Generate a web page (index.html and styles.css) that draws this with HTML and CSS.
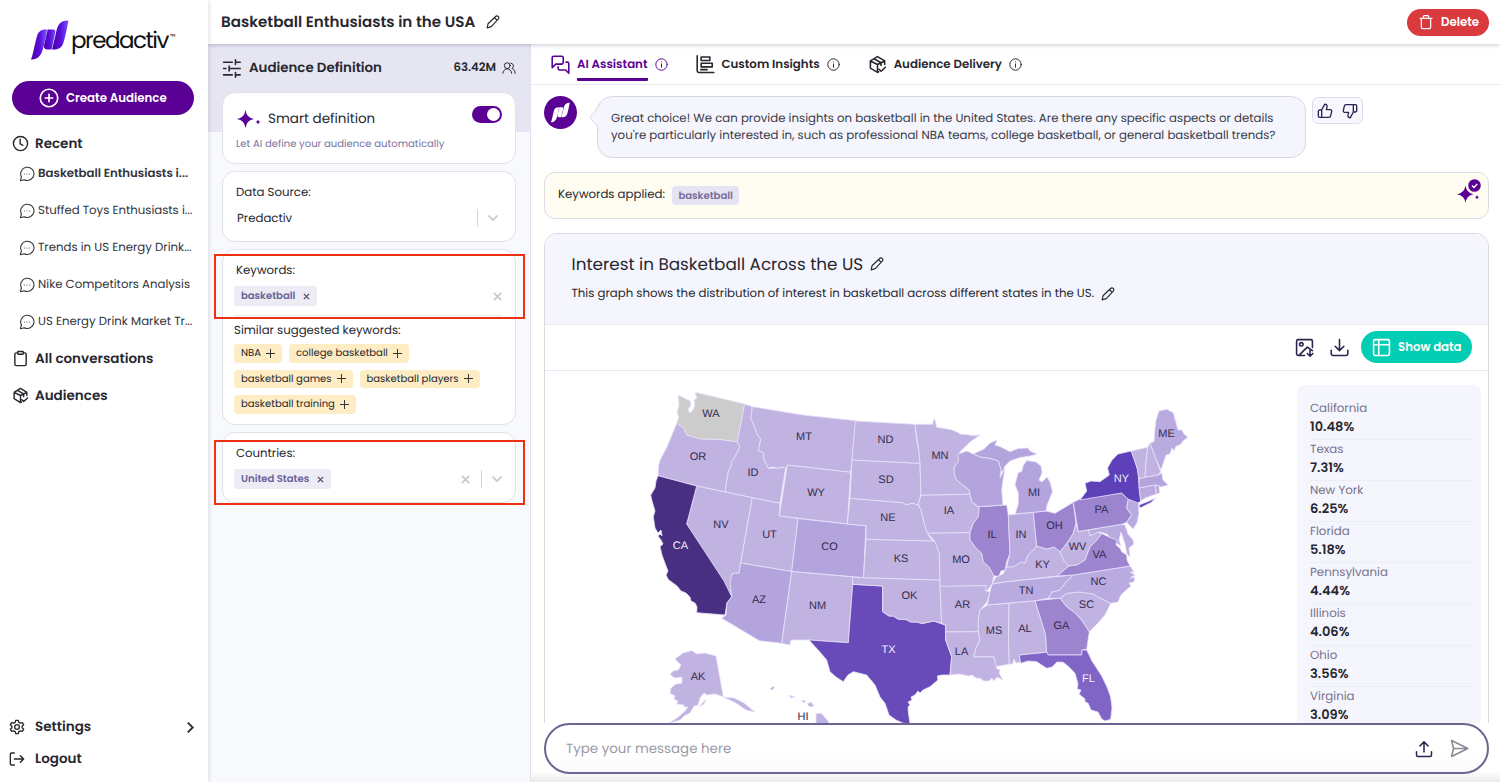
FILE: index.html
```html
<!DOCTYPE html>
<html lang="en">
<head>
<meta charset="utf-8">
<title>Basketball Enthusiasts in the USA</title>
<link rel="stylesheet" href="styles.css">
</head>
<body>
<svg class="defs" width="0" height="0">
  <defs>
    <linearGradient id="brand" x1="0" y1="0" x2="1" y2="0"><stop offset="0" stop-color="#4b00a0"/><stop offset=".55" stop-color="#5a10dc"/><stop offset="1" stop-color="#7a55ff"/></linearGradient>
    <symbol id="mark" viewBox="0 0 38 40"><path d="M0 39.500C2.500 33 4 23 6 16C7.500 11.500 10 9.600 16 9.600C15 16 13.500 23 12 29C10 36 6 40 0 39.500Z"/><path d="M16.600 9.600L22.500 9.600C24.500 9.600 24.600 11 24.300 13L20.500 29.500L16.500 29.500C14 29.500 12.600 28 13 25.500Z"/><path d="M37.500 0.500C36 8 34.500 16 32.500 22.500C31 27.500 28 30 21 29.500L25 13C26.500 5 29 .5 37.500 .5Z"/></symbol>
    <symbol id="chat" viewBox="0 0 24 24"><path d="M2 22l1.700-5.500A10 10 0 1 1 7.800 20.600z"/><path d="M8 12h.01M12 12h.01M16 12h.01"/></symbol>
    <symbol id="pencil" viewBox="0 0 24 24"><path d="M2 22l1.500-7L16.500 2.500a2.800 2.800 0 0 1 4.500 4.500L9 20zM14.500 4.500l4.500 4.500"/></symbol>
    <symbol id="info" viewBox="0 0 24 24"><circle cx="12" cy="12" r="10.500"/><path d="M12 11v6M12 7.200v.1"/></symbol>
    <symbol id="box" viewBox="0 0 24 24"><path d="M21 12V7.500L12 2 3 7.500v9L12 22l1.500-.8M3 7.500l9 4.500 9-4.500M12 12v10M7.500 4.800l9 5v3.500M14 18l2.500 2.500L22 15.500"/></symbol>
    <symbol id="spark" viewBox="0 0 24 18"><path d="M8.500 0Q9.600 7.900 17 9Q9.600 10.100 8.500 18Q7.400 10.100 0 9Q7.400 7.900 8.500 0ZM21 9.500Q21.500 11.600 23.500 12Q21.500 12.400 21 14.500Q20.500 12.400 18.500 12Q20.500 11.600 21 9.500Z"/></symbol>
    <symbol id="thumb" viewBox="0 0 24 24"><path d="M7 10.500v11M15 6l-1 4h6a2 2 0 0 1 2 2.400l-1.500 7a2.600 2.600 0 0 1-2.500 2.100H4a2 2 0 0 1-2-2v-7a2 2 0 0 1 2-2h3L11.500 2A3 3 0 0 1 15 6z"/></symbol>
  </defs>
</svg>
<div class="app">
  <aside class="sidebar">
    <div class="logo"><svg class="logo-mark" fill="url(#brand)"><use href="#mark"/></svg><span class="logo-name">predactiv</span><span class="tm">™</span></div>
    <button class="create"><svg class="ic" viewBox="0 0 24 24"><circle cx="12" cy="12" r="10.500"/><path d="M12 7.500v9M7.500 12h9"/></svg><span>Create Audience</span></button>
    <nav class="nav">
      <div class="nav-head"><svg class="ic" viewBox="0 0 24 24"><circle cx="12" cy="12" r="10"/><path d="M11.500 6v6.500l4 2"/></svg><span>Recent</span></div>
      <div class="nav-item current"><svg class="ic"><use href="#chat"/></svg><span>Basketball Enthusiasts i...</span></div>
      <div class="nav-item"><svg class="ic"><use href="#chat"/></svg><span>Stuffed Toys Enthusiasts i...</span></div>
      <div class="nav-item"><svg class="ic"><use href="#chat"/></svg><span>Trends in US Energy Drink...</span></div>
      <div class="nav-item"><svg class="ic"><use href="#chat"/></svg><span>Nike Competitors Analysis</span></div>
      <div class="nav-item"><svg class="ic"><use href="#chat"/></svg><span>US Energy Drink Market Tr...</span></div>
      <div class="nav-head"><svg class="ic" viewBox="0 0 24 24"><path d="M8 4H6a2 2 0 0 0-2 2v14a2 2 0 0 0 2 2h12a2 2 0 0 0 2-2V6a2 2 0 0 0-2-2h-2"/><rect x="8" y="2" width="8" height="4" rx="1"/></svg><span>All conversations</span></div>
      <div class="nav-head"><svg class="ic"><use href="#box"/></svg><span>Audiences</span></div>
    </nav>
    <div class="nav-foot">
      <div class="foot-item"><svg class="ic" viewBox="0 0 24 24"><circle cx="12" cy="12" r="3.500"/><path d="M10 2h4l.7 3 2.300 1.300 3-.9 2 3.400-2.300 2.200v2l2.300 2.200-2 3.400-3-.9-2.300 1.300-.7 3h-4l-.7-3L7 17.700l-3 .9-2-3.400L4.300 13v-2L2 8.800l2-3.400 3 .9L9.300 5z"/></svg><span>Settings</span><svg class="chev" viewBox="0 0 10 14"><path d="M2 1.500l5.500 5.500L2 12.500"/></svg></div>
      <div class="foot-item"><svg class="ic" viewBox="0 0 24 24"><path d="M8 3H4a2 2 0 0 0-2 2v14a2 2 0 0 0 2 2h4M8 12h14M17 7l5 5-5 5"/></svg><span>Logout</span></div>
    </div>
  </aside>

  <div class="main">
    <header class="topbar"><h1>Basketball Enthusiasts in the USA</h1><svg class="ic pen"><use href="#pencil"/></svg>
      <button class="delete"><svg class="ic" viewBox="0 0 24 24"><path d="M3 6.500h18M8 6.500V4a1.500 1.500 0 0 1 1.500-1.500h5A1.500 1.500 0 0 1 16 4v2.500M5 6.500V20a2 2 0 0 0 2 2h10a2 2 0 0 0 2-2V6.500"/></svg><span>Delete</span></button>
    </header>
    <div class="body">
      <section class="panel">
        <div class="panel-head"><svg class="ic" viewBox="0 0 24 24"><path d="M2 4h11M17 4h6M17 1v6M2 12h3M9 12h14M9 9v6M2 20h11M17 20h6M17 17v6"/></svg><h2>Audience Definition</h2><span class="count">63.42M</span><svg class="ic users" viewBox="0 0 24 24"><circle cx="9" cy="8" r="5"/><path d="M1.500 21a7.500 7.500 0 0 1 15 0M15 3.500a5 5 0 0 1 2 9.300c3 .8 5.500 3.500 5.500 8.200"/></svg></div>
        <div class="card smart">
          <div class="smart-row"><svg class="sparkle"><use href="#spark"/></svg><span class="smart-title">Smart definition</span><span class="toggle"></span></div>
          <p class="hint">Let AI define your audience automatically</p>
        </div>
        <div class="card source"><div class="label">Data Source:</div>
          <div class="select"><span class="value">Predactiv</span><i class="sep"></i><svg class="down" viewBox="0 0 12 8"><path d="M1.500 1.500L6 6l4.500-4.500"/></svg></div>
        </div>
        <div class="card keywords"><div class="label">Keywords:</div>
          <div class="select tags"><span class="tag">basketball <svg class="x" viewBox="0 0 8 8"><path d="M1 1l6 6M7 1L1 7"/></svg></span><svg class="clear" viewBox="0 0 10 10"><path d="M1 1l8 8M9 1L1 9"/></svg></div>
          <div class="similar">Similar suggested keywords:</div>
          <div class="chips"><span class="chip">NBA <b></b></span><span class="chip">college basketball <b></b></span><span class="chip">basketball games <b></b></span><span class="chip">basketball players <b></b></span><span class="chip">basketball training <b></b></span></div>
        </div>
        <div class="card countries"><div class="label">Countries:</div>
          <div class="select tags"><span class="tag">United States <svg class="x" viewBox="0 0 8 8"><path d="M1 1l6 6M7 1L1 7"/></svg></span><svg class="clear" viewBox="0 0 10 10"><path d="M1 1l8 8M9 1L1 9"/></svg><i class="sep"></i><svg class="down" viewBox="0 0 12 8"><path d="M1.500 1.500L6 6l4.500-4.500"/></svg></div>
        </div>
        <div class="callout callout-keywords"></div>
        <div class="callout callout-countries"></div>
      </section>

      <section class="content">
        <div class="tabs">
          <div class="tab active"><svg class="ic" viewBox="0 0 24 24"><path d="M1.500 16V3.500a2 2 0 0 1 2-2h10a2 2 0 0 1 2 2v6a2 2 0 0 1-2 2H6zM19 9h1.500a2 2 0 0 1 2 2v12l-4-4H11a2 2 0 0 1-2-2v-2"/></svg><span class="tab-name">AI Assistant</span><svg class="info"><use href="#info"/></svg></div>
          <div class="tab second"><svg class="ic" viewBox="0 0 24 24"><path d="M1.500 1v19a2 2 0 0 0 2 2h19M6.500 2.500h11v4.500h-11zM6.500 10.500h14v4.500h-14zM6 18.500h8"/></svg><span class="tab-name">Custom Insights</span><svg class="info"><use href="#info"/></svg></div>
          <div class="tab"><svg class="ic"><use href="#box"/></svg><span class="tab-name">Audience Delivery</span><svg class="info"><use href="#info"/></svg></div>
        </div>
        <div class="feed">
          <div class="message">
            <div class="avatar"><svg fill="#fff"><use href="#mark"/></svg></div>
            <div class="bubble"><svg class="tip" viewBox="0 0 12 30"><path d="M11.500 1Q8 9 1.500 15Q1 16 1.500 17L10 26V30H12V0Z" fill="#f5f5fe"/><path d="M11 1Q8 8 1.500 14.500Q.8 15.500 1.500 16.500L8 23Q9 25 9 29" fill="none" stroke="#d8d7e6"/></svg><p>Great choice! We can provide insights on basketball in the United States. Are there any specific aspects or details</p><p>you're particularly interested in, such as professional NBA teams, college basketball, or general basketball trends?</p></div>
            <div class="votes"><svg class="ic"><use href="#thumb"/></svg><svg class="ic flip"><use href="#thumb"/></svg></div>
          </div>
          <div class="applied"><span class="applied-text">Keywords applied:</span><span class="applied-tag">basketball</span>
            <svg class="applied-icon" viewBox="0 0 24 24"><path d="M8.500 6.500Q9.500 14 16.500 15.200Q9.500 16.400 8.500 24Q7.500 16.400 0 15.200Q7.500 14 8.500 6.500Z"/><path d="M20 16q.4 1.800 2 2.200q-1.600.4-2 2.200q-.4-1.800-2-2.200q1.600-.4 2-2.200z"/><circle cx="17.500" cy="6.500" r="7.500" fill="#fffdf2"/><circle cx="17.500" cy="6.500" r="6.300"/><path d="M15 6.500l2 2 3.200-3.500" fill="none" stroke="#fff" stroke-width="1.300"/></svg></div>
          <article class="chart">
            <div class="chart-head"><div class="chart-title"><h3>Interest in Basketball Across the US</h3><svg class="ic pen"><use href="#pencil"/></svg></div>
              <div class="chart-sub"><span>This graph shows the distribution of interest in basketball across different states in the US.</span><svg class="ic pen"><use href="#pencil"/></svg></div></div>
            <div class="chart-tools">
              <svg class="ic" viewBox="0 0 24 24"><path d="M12 22H4a2 2 0 0 1-2-2V4a2 2 0 0 1 2-2h16a2 2 0 0 1 2 2v8M5 22L15.500 11.500 22 16M19 14v9M15.500 19.500L19 23l3.500-3.500"/><circle cx="8" cy="8" r="2.200"/></svg>
              <svg class="ic" viewBox="0 0 24 24"><path d="M1.500 15.500V20a2 2 0 0 0 2 2h17a2 2 0 0 0 2-2v-4.500M12 2v14M6.500 10.500L12 16l5.500-5.500"/></svg>
              <button class="show"><svg class="ic" viewBox="0 0 24 24"><rect x="2" y="2" width="20" height="20" rx="2"/><path d="M2 8.500h20M8.500 2v20"/></svg><span>Show data</span></button>
            </div>
            <div class="chart-body">
              <svg class="map" viewBox="558 371 739 353">
                <g class="states">
                  <path class="none" d="M678.300 395L684 398 690 400.700 691 405 688 410 690 413 693 410 695 405 694 400 697 398 695 393.300 697.300 392.700 744.700 404 737.300 442 720 439.500 700 439 686.700 435 684 428.300 676.700 423.300 679 417 677 413 679 406Z"/>
                  <path d="M676.700 423.300L684 428.300 686.700 435 700 439 720 439.500 737.300 442 740 446.700 735 457 731.700 461.700 731 466 728.300 471.700 725 492 696.700 486 658 475.700 658.500 466 660 460 667 447Z"/>
                  <path d="M744.700 404L752.300 406.700 751 418.300 755 428 757 434 760.700 439.300 758.300 450.700 763.300 452.700 764 459 768.300 468.300 778 468 785.700 467.300 780 503.300 752.300 497.700 725 492 728.300 471.700 731 466 731.700 461.700 735 457 740 446.700 737.300 442Z"/>
                  <path d="M752.300 406.700L803 415 856 420.700 850.700 472.300 787.300 465 785.700 469 784 467 778 468 772 467 768.300 468.300 764 459 763.300 452.700 758.300 450.700 760.700 439.300 757 434 755 428 751 418.300Z"/>
                  <path d="M787.300 465L850.700 472.300 847.300 524 779.300 516Z"/>
                  <path d="M696.700 486L752.300 497.700 740.700 563 739 573.300 735 573 731.700 574 731 583 731.700 596.700 724 585 686.700 524Z"/>
                  <path d="M752.300 497.700L780 503.300 779.300 516 798 518.500 791.700 571.500 740.700 563Z"/>
                  <path class="b" d="M798 518.500L847.300 524 866 525.700 863.500 577.700 791.700 571.500Z"/>
                  <path class="ca" d="M658 475.700L696.700 486 686.700 524 724 581 731.700 596.700 727 603 725 615 696.700 612.700 697 607 695 603 691 601 690 597 686 593 681 591 677 586 668.300 579.500 666 575 668 571 666 566 662 555 660 546.700 663 544 661 540 658 536 660 534 662 536 661 530 658 533 655 528 653.300 516.700 655 511 652.700 503.300 651.500 499 650.700 495 655 488 656 481Z"/>
                  <path class="b" d="M740.700 563L791.700 571.500 781.700 643.300 759.300 640.700 721.700 618.300 726 615 727 603 731.700 596.700 730 583 731.700 574 735 573 739 573.300Z"/>
                  <path d="M791.700 571.500L852.700 577 852.700 584.300 848.300 642.700 809 640 791 640 790 645 781.700 643.300Z"/>
                  <path class="tx" d="M852.700 584.300L882.700 586 882.700 611.700 889 616 893.300 616 898 619 906 619.500 911 622 916.700 622 922 623.500 929 622 934 621 945.700 625.300 945.700 640 951.700 656.700 950 675 942 675 937.300 676 938 680 930 686.700 923 690 920 693 918 691 915 695 911 697 912 700 908 702 910 705 908 707 908.300 712 910 724 903.300 723.300 896 720 889 715 885 703.300 880 697 875 685 866.700 675 853.300 671.700 848 675 843.300 681.700 836 677 830 671.700 826.700 660 819 651 809 640 848.300 642.700Z"/>
                  <path d="M852.700 577L863.500 577.700 940 580 940 586 941.700 623.300 934 621 929 622 922 623.500 916.700 622 911 622 906 619.500 898 619 893.300 616 889 616 882.700 611.700 882.700 586 852.700 584.300Z"/>
                  <path d="M866 539.300L934.700 541 936.700 545 939.300 553.300 940 580 863.500 577.700Z"/>
                  <path d="M850 498.300L903.300 502.700 906 505 912 503 918.300 505 921 510 924 522 927.300 533.300 931 539 934.700 541 866 539.300 866 525.700 847.300 524Z"/>
                  <path d="M852 460L920 463.300 921 493.300 918.300 505 912 503 906 505 903.300 502.700 850 498.300Z"/>
                  <path d="M855.300 421L915 424.300 917 442 919 452 920 463.300 852 460Z"/>
                  <path d="M915 424.300L932.700 424.300 933.500 419 935 420 936.700 427.300 945 428.500 952 430 957 432 960 434 966 434.500 972 435.500 980 435 970 442 960 451.700 958.300 461.700 954.300 467 954.300 475 956.700 480 969 490 970 494.300 921 495.300 920 463.300 919 452Z"/>
                  <path d="M921 495.300L970 494.300 971.700 501.700 979.300 508.300 978.300 516.700 973.300 523.300 970 532.700 927.300 533.300 924 522 921 510 918.300 504Z"/>
                  <path d="M927.300 533.300L970 532.700 970 540 976 548 981.700 553.300 983.300 561.700 989 567 994 576 992 584 987 591 985 590.700 986.700 585.700 940 586.700 940 580 939.300 553.300 934.700 541Z"/>
                  <path d="M940 586.300L986.700 585.700 985 590.700 990 592 987 602 980 610 978.300 620 978.300 631.700 945.700 632 945.700 625.300 941.700 623.300Z"/>
                  <path d="M945.700 632L978.300 631.700 980 640 976 648 974 656.700 994 656.700 995 662 999 664 996 668 1000 670 999 673 1003 680 997 677 994 681 991.700 678 989 681 984 681 980 678.300 976 678 972 675 969 676 959 674 950 675 951.700 656.700 945.700 640Z"/>
                  <path d="M987.300 605L1009 603.300 1008.500 640 1009.300 664 1000 666 996 666 994 656.700 974 656.700 976 648 980 640 978.300 631.700 978.300 620 980 610Z"/>
                  <path d="M1009 603.300L1035 600.700 1041 620 1045.700 635 1046.700 652.300 1019.300 655 1021 662 1016 663 1014 659 1012.500 664 1009.300 664 1008.500 640Z"/>
                  <path class="c" d="M1035 600.700L1060 598.300 1066.700 606.700 1074 612 1081.700 620 1089.300 631.700 1086.700 649.300 1082 650 1081.700 655 1048.300 655 1046.700 652 1045.700 635Z"/>
                  <path class="fl" d="M1019.300 655L1046.700 652.300 1048.300 655 1081.700 655 1082 650 1086.700 650 1092 661 1101.700 676 1107 687 1110.700 697 1112 708 1110.700 719.300 1105 721 1101.700 719 1098 712 1091 710 1088 703 1085 702 1085 699 1079 694 1081 690 1077 689 1078 684 1075 673.300 1069 667 1063.300 662.300 1057 662 1052 667 1046.700 668.300 1036.700 661.700 1028 661 1020.700 663.300Z"/>
                  <path d="M1060 598.300L1066.700 593.300 1080 592 1093.300 594 1097 596.500 1110.700 603.300 1105 615 1097 624 1089.300 631.700 1081.700 620 1074 612 1066.700 606.700Z"/>
                  <path class="a" d="M1048.300 598.300L1052 592 1060 590 1066 582 1073.300 575 1130 566 1134 572 1130 572 1135 575 1130 578 1135 577 1134 582 1129 583 1131 586 1124 592 1121 595 1118 602 1110.700 603.300 1097 596.500 1093.300 594 1080 592 1066.700 593.300 1060 598.300Z"/>
                  <path class="a" d="M992 584L1006.700 581.700 1073.300 575 1066 582 1060 590 1052 592 1048.300 598.300 1035 600.700 987.300 605 990 592Z"/>
                  <path d="M996 577L1003 574 1006.700 566.700 1013 567 1021.700 562 1025 563 1028 555 1033.300 550 1036.700 546 1047 549 1054 547 1060 551.700 1064 561 1069 566 1057 576 1006.700 581.700 992 584Z"/>
                  <path class="c" d="M978.300 506.700L1006.700 505 1008.300 515 1010 553.300 1006.700 562 1005 570 1001 571 999 576 994 576 989 567 983.300 561.700 981.700 553.300 976 548 970 540 970 532.700 973.300 523.300 978.300 516.700 979.300 508.300Z"/>
                  <path class="a" d="M1008.300 515L1033.300 512.300 1036.700 546 1033.300 550 1028 555 1025 563 1021.700 562 1013 567 1006.700 566.700 1010 553.300Z"/>
                  <path class="c" d="M1033.300 512.300L1046 511 1055 513.300 1063.300 508.300 1073.300 502.300 1076 523.300 1073.300 533.300 1067 543.300 1060 551.700 1054 547 1047 549 1036.700 546Z"/>
                  <path class="b" d="M1026.700 460.500L1036 462 1041 466 1042 473 1039 480 1042 482 1047 477 1050 482 1052.500 491.700 1050 498 1047 505 1046 511 1033.300 512.300 1015 514 1018.300 504 1018.300 493 1015 485 1018 473 1022 471 1023 466Z"/>
                  <path class="b" d="M973 454L984 449 990 443 997 440 995 445 1001 447 1010 451.700 1018 448.500 1028 448 1030 451 1037 454 1030 456 1020 457.500 1010 461 1005 466 1002 473 998.300 461 990 458.500 980 457Z"/>
                  <path class="b" d="M958.300 454L967 451 973 454 980 457 990 458.500 998.300 461 1001 470 1000 478 1005 468 1003 480 1001.700 490 1003 505 978.300 506.700 971.700 501.700 969 490 956.700 480 954.300 475 954.300 467 958.300 461.700Z"/>
                  <path class="c" d="M1073.300 502.300L1080 499 1121.700 493 1128.300 499.300 1126.700 508.300 1131.700 515 1126.700 522.300 1121 524.500 1078.300 531.700Z"/>
                  <path class="ny" d="M1080 500L1086.700 491 1085 483.300 1091 481 1100 481.700 1109.300 475 1107.500 468 1112 460 1118 454 1131.300 451 1135 461 1138 470 1139 484 1140.700 501 1137 504 1128.300 499.300 1121.700 493ZM1139 505L1148 501.500 1155.500 498 1151 502.500 1140 508Z"/>
                  <path class="a" d="M1128.300 499.300L1138.300 503 1139 513 1137 523 1133 529 1126.700 522.300 1131.700 515 1126.700 508.300Z"/>
                  <path d="M1131.300 451L1147.700 447.300 1146 461.700 1145 477.300 1139 478.500 1137 468Z"/>
                  <path d="M1147.700 447.300L1150 443 1156 459 1160.700 471.700 1158 475 1145 477.300 1146 461.700Z"/>
                  <path class="a" d="M1150 443L1154 441.700 1155 428.300 1156 420 1159 411 1166.700 409.300 1173.300 412.700 1178 430 1182 430 1184 434 1187.700 437.300 1183 441 1180 445 1176 446 1174 451 1172 448 1170 454 1166 455 1161 470 1156 459Z"/>
                  <path class="b" d="M1139 478.500L1158 475 1161.700 473 1163 480 1168 485 1161 487 1156 485 1139 488Z"/>
                  <path class="a" d="M1139 488L1155 485 1156.500 494 1145 498 1140.700 501Z"/><path class="a" d="M1155 485L1159 486 1159.500 493 1156.500 494Z"/>
                  <path class="a" d="M1088.300 530L1121 524.500 1125 525 1128 534 1133 540 1134 544 1129 548 1130 557 1127 554 1125 544 1121 532 1119 540 1121 546 1112 540 1107 534 1100 532 1090 536Z"/>
                  <path d="M1078.300 531.700L1088.300 530 1090 536 1098 532 1101.700 534 1097 540 1090 547 1085 560 1077 565 1069 566 1064 561 1060 551.700 1067 543.300 1073.300 533.300 1076 523.300Z"/>
                  <path class="c" d="M1101.700 533.500L1109 537 1116.700 540 1116 545 1120 548.300 1122 552 1126.700 555 1127 560 1130 566 1073.300 575 1057 576 1069 566 1077 565 1085 560 1090 547 1097 540Z"/>
                  <path d="M691.700 650.700L697 654 705 653 716 656 723.300 696.700 715 694 707 695 704 693 700 698 698 705 694 706 690 713 684 716 680 720 669 723 677 718 684 712 688 707 684 707 684 705 676.700 704 678 701 674 699 675 696 670 693.300 671 688 676 684 682 683.300 681.700 677 675 678 670 674.500 673 671 678.300 670 681 665 675 659 683 653Z"/>
                  <path d="M699 707L706 699 704 704ZM723 697L734 698 744 703 755 712 746 710 736 703Z"/>
                  <path d="M770 689L773 686 774.500 688 772 690ZM789 695L795 697 791 698ZM801 700L806 701 804 703ZM807 704L811 702 814 706 810 707ZM816 714L821 713 829 722 827 724 816 724Z"/>
                </g>
                <g class="abbr">
                  <text x="711" y="417">WA</text><text x="698" y="460">OR</text><text x="753" y="476">ID</text><text x="804" y="440">MT</text><text x="885.500" y="443">ND</text><text x="886" y="482.500">SD</text><text x="940" y="459">MN</text><text x="816" y="495.500">WY</text><text x="721" y="528">NV</text><text x="769.500" y="537.500">UT</text><text x="829.500" y="549.500">CO</text><text class="inv" x="680.500" y="549">CA</text><text x="888" y="521">NE</text><text x="949" y="514">IA</text><text x="901" y="561.500">KS</text><text x="961" y="562.500">MO</text><text x="992" y="538">IL</text><text x="1021" y="538">IN</text><text x="1034" y="496">MI</text><text x="1054.500" y="528.500">OH</text><text x="1101.500" y="513">PA</text><text class="inv" x="1121.500" y="482">NY</text><text x="1166.500" y="437">ME</text><text x="1077.500" y="550">WV</text><text x="1099.500" y="558">VA</text><text x="1042.500" y="567.500">KY</text><text x="1098.500" y="584.500">NC</text><text x="1026" y="594">TN</text><text x="1086.500" y="608">SC</text><text x="759" y="603">AZ</text><text x="817.500" y="609">NM</text><text x="909.500" y="599">OK</text><text x="962.500" y="607.500">AR</text><text class="inv" x="888.500" y="653">TX</text><text x="961.500" y="655">LA</text><text x="994" y="634">MS</text><text x="1025" y="631.500">AL</text><text x="1061.500" y="629">GA</text><text class="inv" x="1088.500" y="682">FL</text><text x="698" y="680">AK</text><text x="803" y="720">HI</text>
                </g>
              </svg>
              <dl class="stats">
                <div><dt>California</dt><dd>10.48%</dd></div><div><dt>Texas</dt><dd>7.31%</dd></div><div><dt>New York</dt><dd>6.25%</dd></div><div><dt>Florida</dt><dd>5.18%</dd></div><div><dt>Pennsylvania</dt><dd>4.44%</dd></div><div><dt>Illinois</dt><dd>4.06%</dd></div><div><dt>Ohio</dt><dd>3.56%</dd></div><div><dt>Virginia</dt><dd>3.09%</dd></div>
              </dl>
            </div>
          </article>
        </div>
        <div class="composer-wrap"><div class="composer"><span class="placeholder">Type your message here</span>
          <svg class="ic" viewBox="0 0 24 24"><path d="M2 15.500V20a2 2 0 0 0 2 2h16a2 2 0 0 0 2-2v-4.500M12 16V2.500M6.500 8L12 2.500 17.500 8"/></svg>
          <svg class="ic send" viewBox="0 0 24 24"><path d="M2 2l20.500 10L2 22l2.500-10zM4.500 12h18"/></svg></div></div>
      </section>
    </div>
  </div>
</div>
</body>
</html>
```
FILE: styles.css
```css
* { box-sizing: border-box; margin: 0; padding: 0; }
body { font-family: Poppins, Inter, sans-serif; color: #27272f; background: #fff; overflow: hidden; text-rendering: geometricPrecision; }
.defs { position: absolute; }
button { font: inherit; border: 0; color: #fff; display: flex; align-items: center; }
span, p, h1, h2, h3 { white-space: nowrap; }
svg { flex: none; display: block; }
.ic { width: 17px; height: 17px; fill: none; stroke: currentColor; stroke-width: 2; stroke-linecap: round; stroke-linejoin: round; }
.app { display: flex; width: 1500px; height: 782px; }

.sidebar { width: 208px; display: flex; flex-direction: column; background: #fff; position: relative; box-shadow: 0 0 5px rgba(40, 30, 90, .2); z-index: 2; }
.logo { display: flex; padding: 20px 0 0 31px; height: 81px; }
.logo-mark { width: 38px; height: 40px; }
.logo-name { font-size: 23px; line-height: 36px; margin: 3px 0 0 2px; color: #111; letter-spacing: -1.5px; }
.tm { font-size: 7px; line-height: 36px; margin-left: 2px; }
.create { width: 182px; height: 34px; margin-left: 12px; border-radius: 17px; background: #5b0094; padding-left: 27px; gap: 7px; font-size: 11.800px; font-weight: 600; }
.create .ic { width: 20px; height: 20px; }
.nav { margin-top: 10px; }
.nav-head { height: 37px; display: flex; align-items: center; padding-left: 12px; gap: 6px; font-size: 13.500px; font-weight: 600; }
.nav-item { height: 37px; display: flex; align-items: center; padding-left: 19px; gap: 3px; font-size: 11.740px; color: #33333c; }
.nav-item span { padding-top: 2px; }
.nav-item .ic { width: 16px; height: 16px; stroke-width: 1.600; }
.nav-head:first-child { margin-bottom: -7px; }
.nav-item.current { font-weight: 600; }
.nav-foot { margin-top: auto; padding: 0 0 7px 9px; }
.foot-item { height: 32px; display: flex; align-items: center; gap: 10px; font-size: 13.500px; font-weight: 600; }
.foot-item .ic { width: 16px; height: 16px; }
.chev { width: 9px; height: 13px; margin: 0 13px 0 auto; fill: none; stroke: #27272f; stroke-width: 2; }

.main { flex: 1; min-width: 0; display: flex; flex-direction: column; }
.topbar { height: 44px; display: flex; align-items: center; padding: 0 11px 0 13px; position: relative; z-index: 1; background: #fff; box-shadow: 0 1px 4px rgba(40, 30, 70, .25); }
h1 { font-size: 15.120px; font-weight: 600; }
.pen { width: 14px; height: 14px; stroke-width: 2; }
h1 + .pen { margin-left: 11px; }
.delete { margin-left: auto; width: 82px; height: 27px; border-radius: 14px; background: #d93a3d; padding-left: 11px; gap: 7px; font-size: 11.800px; font-weight: 600; }
.delete .ic { width: 16px; height: 16px; stroke-width: 1.800; }
.body { flex: 1; min-height: 0; display: flex; }

.panel { width: 323px; position: relative; border-right: 1px solid #e0e0ea; padding: 0 14px; background: linear-gradient(#e6e5f2 88px, #f8f9fc 88px); }
.panel-head { height: 48px; display: flex; align-items: center; }
.panel-head > .ic { width: 19px; height: 19px; }
h2 { font-size: 13.400px; font-weight: 600; margin-left: 8px; }
.count { margin-left: auto; font-size: 11.700px; font-weight: 600; padding-top: 1px; }
.panel-head > .users { width: 14px; height: 14px; margin-left: 6px; stroke-width: 1.700; }
.card { background: #fff; border: 1px solid #e1e1eb; border-radius: 13px; padding: 0 13px; }
.smart { height: 72px; margin-bottom: 7px; }
.smart-row { display: flex; align-items: center; height: 42px; padding-top: 9px; }
.sparkle { width: 24px; height: 18px; fill: #5b0094; margin-left: 1px; }
.smart-title { font-size: 13.500px; margin-left: 7px; }
.toggle { width: 30px; height: 17px; border-radius: 9px; background: #5b0094; margin: -8px 0 0 auto; padding: 2px; display: flex; justify-content: flex-end; }
.toggle::after { content: ""; width: 13px; height: 13px; border-radius: 50%; background: #fff; }
.hint { font-size: 10.070px; line-height: 17px; color: #7a749e; }
.source { height: 71px; margin-bottom: 7px; padding-top: 10px; }
.label { font-size: 11.740px; line-height: 18px; padding-top: 2px; }
.select { display: flex; align-items: center; height: 32px; }
.value { font-size: 11.740px; margin-left: 1px; padding-top: 2px; }
.sep { width: 1px; height: 18px; background: #d4d4da; margin-left: auto; }
.down { width: 12px; height: 8px; margin: 0 3px 0 9px; fill: none; stroke: #c4c4ca; stroke-width: 1.600; }
.keywords { height: 176px; margin-bottom: 7px; padding-top: 10px; }
.tags { margin-left: -2px; }
.tag { height: 20px; background: #edecf4; border-radius: 3px; color: #68629a; font-size: 10.050px; font-weight: 600; display: flex; align-items: center; padding: 0 7px; gap: 8px; }
.x { width: 7px; height: 7px; stroke: #55506f; stroke-width: 1.600; }
.clear { width: 9px; height: 9px; stroke: #c8c8cc; stroke-width: 1.800; margin-left: auto; }
.keywords .select { border-bottom: 1px solid #e9e8f0; height: 36px; padding-bottom: 3px; }
.similar { font-size: 11.740px; line-height: 20px; margin: 5px 0 3px -2px; white-space: nowrap; }
.chips { display: flex; flex-wrap: wrap; gap: 7px; margin-left: -2px; }
.chip { height: 18.500px; background: #fdecc4; border-radius: 4px; padding: 0 7px; font-size: 10.050px; display: flex; align-items: center; gap: 5px; }
.chip b { width: 9px; height: 9px; background: linear-gradient(#333, #333) center / 9px 1px no-repeat, linear-gradient(#333, #333) center / 1px 9px no-repeat; }
.countries { height: 71px; padding-top: 10px; }
.countries .sep { margin-left: 11px; }
.countries .down { margin-right: -1px; }
.callout { position: absolute; left: 6px; width: 311px; height: 65px; border: 2px solid #ef2f12; }
.callout-keywords { top: 210px; }
.callout-countries { top: 396px; }

.content { flex: 1; min-width: 0; display: flex; flex-direction: column; position: relative; }
.tabs { height: 41px; border-bottom: 1px solid #e9e9ee; display: flex; padding-left: 20px; }
.tab { display: flex; align-items: center; font-size: 11.800px; font-weight: 600; height: 41px; }
.tab .ic { width: 19px; height: 19px; }
.tab-name { margin: 0 7px; line-height: 34px; height: 33px; border-bottom: 3px solid transparent; border-radius: 1px; }
.tab .info { width: 13px; height: 13px; fill: none; stroke: currentColor; stroke-width: 1.800; stroke-linecap: round; }
.active { color: #5b0094; }
.active .tab-name { border-color: #5b0094; }
.second { margin: 0 28px; }
.feed { flex: 1; min-height: 0; overflow: hidden; padding: 11px 11px 0 13px; }
.message { display: flex; align-items: flex-start; height: 62px; }
.avatar { width: 33px; height: 33px; border-radius: 50%; background: #5b0094; margin-right: 20px; padding: 6px 7px; }
.avatar svg { width: 19px; height: 21px; }
.bubble { width: 709px; height: 62px; background: #f5f5fe; border: 1px solid #d8d7e6; border-radius: 15px; padding: 14px 13px 0; position: relative; font-size: 11.750px; line-height: 17px; color: #3b3b45; }
.tip { position: absolute; left: -9px; top: 5px; width: 12px; height: 30px; }
.votes { margin-left: 6px; width: 51px; height: 27px; border: 1px solid #dddced; background: #f7f7fe; border-radius: 6px; display: flex; align-items: center; justify-content: space-between; padding: 0 4px; color: #2b2350; margin-top: 1px; }
.votes .ic { width: 16px; height: 16px; }
.flip { transform: rotate(180deg); }
.applied { height: 47px; margin-top: 14px; border: 1px solid #dddce2; border-radius: 11px; background: #fffdf2; display: flex; align-items: center; padding: 0 7px 1px 13px; }
.applied-text { font-size: 11.740px; }
.applied-tag { margin-left: 7px; background: #e6e4f2; color: #746d9c; border-radius: 4px; height: 19px; line-height: 19px; padding: 0 6.500px; font-size: 10.100px; font-weight: 600; }
.applied-icon { width: 24px; height: 24px; margin: -8px 0 0 auto; fill: #5b0094; }
.chart { margin-top: 14px; border: 1px solid #d9d8e4; border-radius: 13px; height: 600px; }
.chart-head { height: 91px; background: #f5f5fe; border-bottom: 1px solid #ececf4; border-radius: 12px 12px 0 0; padding: 18px 26.500px 0; }
.chart-title, .chart-sub { display: flex; align-items: center; }
h3 { font-size: 16.820px; line-height: 24px; font-weight: 400; }
.chart-title .pen, .chart-sub .pen { margin-left: 7px; }
.chart-sub { font-size: 11.740px; line-height: 20px; margin-top: 8px; }
.chart-tools { height: 46px; border-bottom: 1px solid #e8e8ee; display: flex; align-items: center; justify-content: flex-end; padding: 0 16px 1px 0; gap: 16px; color: #2b2350; }
.chart-tools .ic { width: 19px; height: 19px; }
.show { width: 111px; height: 32px; margin-left: -4px; border-radius: 16px; background: #03cdb2; padding-left: 11px; gap: 7px; font-size: 11.750px; font-weight: 600; }
.chart-body { display: flex; }
.map { width: 739px; height: 353px; margin-left: 13px; }
.states path { fill: #c0b2e1; stroke: #e9e1fa; stroke-width: .8; stroke-linejoin: round; }
.states .none { fill: #ccc; }
.states .a { fill: #b9aae0; }
.states .b { fill: #b3a4de; }
.states .c { fill: #9c84cf; }
.states .fl { fill: #8065c6; }
.states .tx { fill: #684ab9; }
.states .ny { fill: #5e40b8; }
.states .ca { fill: #492f82; }
.abbr { font: 11px "Liberation Sans", sans-serif; fill: #332b4d; text-anchor: middle; }
.abbr .inv { fill: #f3effc; }
.stats { width: 184px; height: 380px; margin-top: 14px; background: #f5f5fe; border-radius: 8px; padding: 14px 8px 0 13px; }
.stats div { height: 41.100px; border-bottom: 1px solid #ededf6; }
.stats dt { font-size: 11.800px; line-height: 21px; color: #76738a; }
.stats dd { font-size: 13px; line-height: 14px; font-weight: 600; }
.composer-wrap { padding: 0 11px 8px 13px; height: 59px; background: linear-gradient(#fff 48px, #ebebed); }
.composer { height: 51px; border: 2px solid #6b6691; border-radius: 26px; background: linear-gradient(#fff 60%, #fafafb); display: flex; align-items: center; padding: 0 18px 0 20px; color: #2b2350; }
.placeholder { color: #989ba8; font-size: 13.400px; margin-right: auto; }
.composer .ic { width: 18px; height: 18px; }
.composer .send { width: 19px; height: 19px; margin-left: 17px; color: #8b8998; }
```
